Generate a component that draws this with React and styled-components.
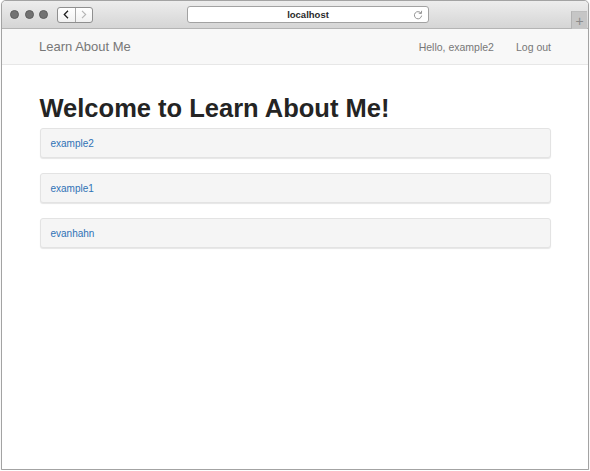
import React from 'react';
import styled, { createGlobalStyle } from 'styled-components';

const GlobalStyle = createGlobalStyle`
  html, body { margin: 0; padding: 0; background: #fff; }
  body { font-family: "Liberation Sans", Arial, sans-serif; }
  * { box-sizing: border-box; }
`;

const Window = styled.div`
  margin: 0 1px;
  width: 588px;
  height: 470px;
  border: 1px solid #a3a3a3;
  border-radius: 5px 5px 0 0;
  overflow: hidden;
  display: flex;
  flex-direction: column;
  background: #fff;
  box-shadow: 0 0 1px rgba(0, 0, 0, 0.25);
`;

const Toolbar = styled.div`
  height: 28px;
  flex: none;
  display: flex;
  align-items: center;
  padding-left: 8px;
  background: linear-gradient(#ededed, #d5d5d5);
  border-bottom: 1px solid #b4b4b4;
`;

const Lights = styled.div`
  display: flex;
  gap: 5.5px;
`;

const Light = styled.span`
  width: 9px;
  height: 9px;
  border-radius: 50%;
  background: #727272;
  border: 0.5px solid #5e5e5e;
`;

const NavGroup = styled.div`
  margin-left: 9px;
  display: flex;
  width: 36px;
  height: 16px;
  border: 1px solid #8f8f8f;
  border-radius: 3px;
  background: linear-gradient(#ffffff, #f1f1f1);
  overflow: hidden;
`;

const NavButton = styled.div`
  flex: 1;
  display: flex;
  align-items: center;
  justify-content: center;
  & + & { border-left: 1px solid #a8a8a8; }
`;

const AddressBar = styled.div`
  margin-left: 94px;
  width: 242px;
  height: 17px;
  border: 1px solid #a2a2a2;
  border-radius: 3px;
  background: #fff;
  display: flex;
  align-items: center;
  justify-content: center;
  position: relative;
  font-size: 9.5px;
  font-weight: bold;
  color: #2a2a2a;
`;

const Reload = styled.svg`
  position: absolute;
  right: 5px;
  top: 3px;
`;

const Spacer = styled.div`
  flex: 1;
`;

const PlusTab = styled.div`
  align-self: flex-end;
  width: 16px;
  height: 18px;
  margin-right: 1px;
  margin-bottom: -1px;
  background: #c6c6c6;
  border-left: 1px solid #b2b2b2;
  border-top: 1px solid #bdbdbd;
  display: flex;
  align-items: center;
  justify-content: center;
  color: #8a8a8a;
  font-size: 14px;
  font-weight: 300;
  line-height: 1;
`;

const Navbar = styled.nav`
  height: 36px;
  flex: none;
  display: flex;
  align-items: center;
  justify-content: space-between;
  padding: 0 37px;
  background: #f8f8f8;
  border-bottom: 1px solid #e7e7e7;
`;

const Brand = styled.a`
  font-size: 13px;
  color: #777;
  text-decoration: none;
`;

const NavLinks = styled.div`
  display: flex;
  gap: 22px;
`;

const NavLink = styled.a`
  font-size: 10.5px;
  color: #777;
  text-decoration: none;
`;

const Container = styled.main`
  width: 511px;
  margin: 0 auto;
  padding-top: 29px;
`;

const Heading = styled.h1`
  margin: 0 0 6px;
  font-size: 25.5px;
  line-height: 28px;
  font-weight: bold;
  color: #242424;
`;

const List = styled.div`
  display: flex;
  flex-direction: column;
  gap: 15px;
`;

const Card = styled.div`
  height: 30px;
  display: flex;
  align-items: center;
  padding: 0 10px;
  background: #f5f5f5;
  border: 1px solid #e3e3e3;
  border-radius: 3px;
  box-shadow: 0 1px 1px rgba(0, 0, 0, 0.1);
`;

const UserLink = styled.a`
  font-size: 10px;
  color: #2f72b5;
  text-decoration: none;
`;

const users = ['example2', 'example1', 'evanhahn'];

export default function App() {
  return (
    <>
      <GlobalStyle />
      <Window>
        <Toolbar>
          <Lights>
            <Light />
            <Light />
            <Light />
          </Lights>
          <NavGroup>
            <NavButton>
              <svg width="6" height="9" viewBox="0 0 6 9">
                <path d="M5 0.8 L1.3 4.5 L5 8.2" fill="none" stroke="#1e1e1e" strokeWidth="1.3" />
              </svg>
            </NavButton>
            <NavButton>
              <svg width="6" height="9" viewBox="0 0 6 9">
                <path d="M1 0.8 L4.7 4.5 L1 8.2" fill="none" stroke="#b4b4b4" strokeWidth="1.1" />
              </svg>
            </NavButton>
          </NavGroup>
          <AddressBar>
            localhost
            <Reload width="10" height="10" viewBox="0 0 10 10">
              <path d="M8 3.2 A3.6 3.6 0 1 0 8.6 5.6" fill="none" stroke="#8a8a8a" strokeWidth="0.9" />
              <path d="M8.6 0.8 L8.4 3.6 L5.7 3.1" fill="none" stroke="#8a8a8a" strokeWidth="0.9" />
            </Reload>
          </AddressBar>
          <Spacer />
          <PlusTab>+</PlusTab>
        </Toolbar>
        <Navbar>
          <Brand href="#">Learn About Me</Brand>
          <NavLinks>
            <NavLink href="#">Hello, example2</NavLink>
            <NavLink href="#">Log out</NavLink>
          </NavLinks>
        </Navbar>
        <Container>
          <Heading>Welcome to Learn About Me!</Heading>
          <List>
            {users.map((u) => (
              <Card key={u}>
                <UserLink href="#">{u}</UserLink>
              </Card>
            ))}
          </List>
        </Container>
      </Window>
    </>
  );
}
